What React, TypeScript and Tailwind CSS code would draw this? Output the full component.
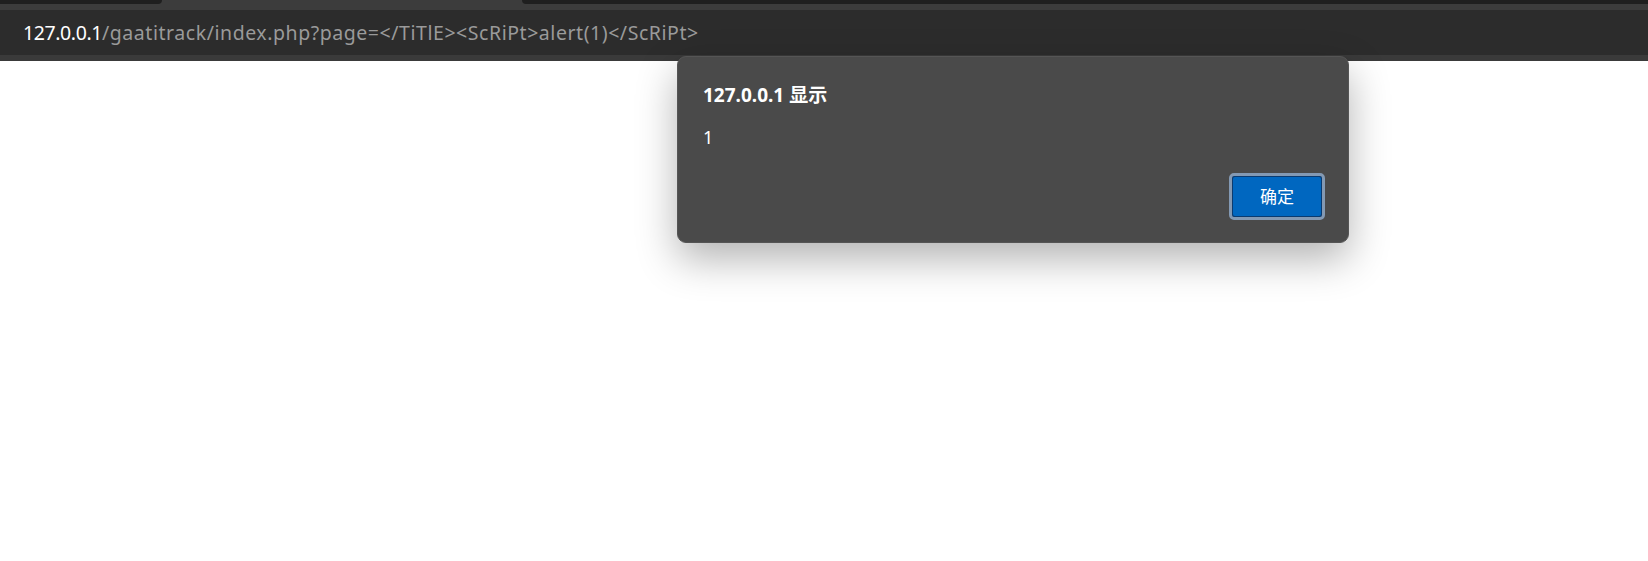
import React from 'react';

const URL_HOST = '127.0.0.1';
const URL_REST = '/gaatitrack/index.php?page=</TiTlE><ScRiPt>alert(1)</ScRiPt>';

const font = { fontFamily: '"Noto Sans", "Noto Sans CJK SC", sans-serif' };

const TopBar: React.FC = () => (
  <div className="flex flex-col">
    {/* tab strip */}
    <div className="flex h-[10px] bg-[#3c3c3c]">
      <div className="h-[4px] w-[162px] rounded-br-[6px] bg-[#1f1f1f]" />
      <div className="flex-1" />
      <div className="h-[4px] w-[1126px] rounded-bl-[6px] bg-[#1f1f1f]" />
    </div>
    {/* address bar */}
    <div className="flex h-[45px] items-center bg-[#2c2c2c] pl-[23px]">
      <span className="text-[19.5px] leading-none text-[#9a9a9a]" style={font}>
        <span className="tracking-[-0.4px] text-white">{URL_HOST}</span>
        <span className="tracking-[0.55px]">{URL_REST}</span>
      </span>
    </div>
    <div className="h-[6px] bg-[#3a3a3a]" />
  </div>
);

const AlertDialog: React.FC = () => (
  <div
    className="absolute left-[677px] top-[56px] flex h-[187px] w-[672px] flex-col rounded-[9px] border border-[#555] bg-[#4a4a4a] pl-[25px] pr-[23px] pt-[26px] shadow-[0_16px_40px_rgba(0,0,0,0.3)]"
    style={font}
  >
    <h1 className="text-[19px] font-bold leading-[24px] text-white">127.0.0.1 显示</h1>
    <p className="mt-[18px] text-[18px] leading-[24px] text-white">1</p>
    <div className="mt-auto mb-[22px] flex justify-end">
      <button className="flex h-[47px] w-[96px] items-center justify-center rounded-[5px] border-[3px] border-[#8399b3] bg-[#0b3b70] p-[1px]">
        <span className="flex h-full w-full items-center justify-center rounded-[2px] bg-[#0067c0] text-[17px] text-white">
          确定
        </span>
      </button>
    </div>
  </div>
);

export default function App() {
  return (
    <div className="relative h-[561px] w-[1648px] overflow-hidden bg-white">
      <TopBar />
      <AlertDialog />
    </div>
  );
}
